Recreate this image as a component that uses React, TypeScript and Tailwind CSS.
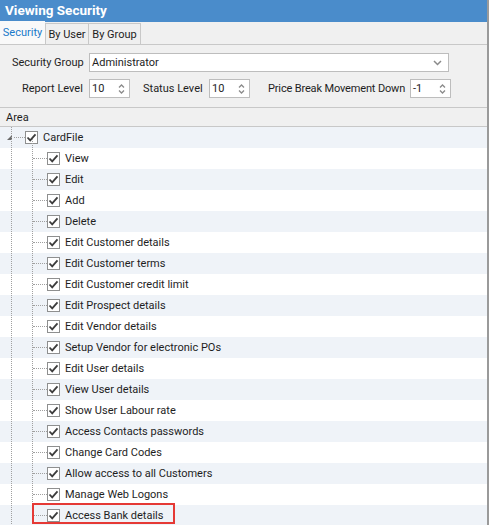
import React from 'react'

const items = [
  'View',
  'Edit',
  'Add',
  'Delete',
  'Edit Customer details',
  'Edit Customer terms',
  'Edit Customer credit limit',
  'Edit Prospect details',
  'Edit Vendor details',
  'Setup Vendor for electronic POs',
  'Edit User details',
  'View User details',
  'Show User Labour rate',
  'Access Contacts passwords',
  'Change Card Codes',
  'Allow access to all Customers',
  'Manage Web Logons',
  'Access Bank details',
]

function Check() {
  return (
    <span className="flex h-[13px] w-[13px] shrink-0 items-center justify-center border border-[#8e8f8f] bg-white">
      <svg width="11" height="11" viewBox="0 0 11 11">
        <path d="M1.5 5.5 L4.2 8.3 L9.5 2.3" fill="none" stroke="#3c3c3c" strokeWidth="1.8" />
      </svg>
    </span>
  )
}

function Spin({ value }: { value: string }) {
  return (
    <div className="flex h-[19px] w-[41px] shrink-0 items-center justify-between border border-[#bdbdbd] bg-white pl-[2px] pr-[4px]">
      <span>{value}</span>
      <svg width="7" height="12" viewBox="0 0 7 12">
        <path d="M1 4.5 L3.5 2 L6 4.5 M1 7.5 L3.5 10 L6 7.5" fill="none" stroke="#8a8a8a" strokeWidth="1.3" />
      </svg>
    </div>
  )
}

export default function App() {
  return (
    <div
      className="h-[525px] w-[489px] overflow-hidden whitespace-nowrap border-r-2 border-[#9a9a9a] bg-[#f0f0f0] text-[11px] leading-none text-[#1e1e1e]"
      style={{ fontFamily: 'Roboto, "Noto Sans", sans-serif' }}
    >
      <div className="flex h-[22px] items-center bg-[#4a8ccb] pl-[5px] text-[13.5px] font-bold text-white">
        Viewing Security
      </div>
      <div className="flex h-[23px] items-end border-b border-[#c8c8c8]">
        <div className="flex h-[23px] w-[45px] items-center justify-center bg-[#f9f9f9] text-[#1979ca]">Security</div>
        <div className="flex h-[21px] w-[44px] items-center justify-center border-x border-t border-[#c8c8c8] bg-[#efefef]">By User</div>
        <div className="flex h-[21px] w-[52px] items-center justify-center border-r border-t border-[#c8c8c8] bg-[#efefef]">By Group</div>
      </div>
      <div className="flex flex-col gap-[7px] border-b border-[#c8c8c8] pb-[9px] pt-[8px]">
        <div className="flex items-center">
          <span className="w-[89px] shrink-0 pl-[12px]">Security Group</span>
          <div className="flex h-[19px] w-[360px] items-center justify-between border border-[#bdbdbd] bg-white pl-[2px] pr-[6px]">
            <span>Administrator</span>
            <svg width="9" height="6" viewBox="0 0 9 6">
              <path d="M1 1 L4.5 4.5 L8 1" fill="none" stroke="#8a8a8a" strokeWidth="1.5" />
            </svg>
          </div>
        </div>
        <div className="flex items-center">
          <span className="w-[89px] shrink-0 pl-[22px]">Report Level</span>
          <Spin value="10" />
          <span className="ml-[13px] w-[66px] shrink-0">Status Level</span>
          <Spin value="10" />
          <span className="ml-[18px] w-[142px] shrink-0 tracking-[-0.15px]">Price Break Movement Down</span>
          <Spin value="-1" />
        </div>
      </div>
      <div className="flex h-[19px] items-center border-b border-[#c8c8c8] pl-[6px]">Area</div>
      <div className="relative bg-white">
        <div className="absolute left-[11px] top-0 h-full border-l border-dotted border-[#a0a0a0]" />
        <div className="absolute left-[32px] top-[12px] h-full border-l border-dotted border-[#a0a0a0]" />
        <div className="flex h-[21px] items-center bg-[#eff3f8]">
          <svg className="ml-[6px]" width="7" height="7" viewBox="0 0 7 7">
            <path d="M6 1 L6 6 L1 6 Z" fill="#6a6a6a" />
          </svg>
          <span className="ml-[1px] w-[11px] border-t border-dotted border-[#a0a0a0]" />
          <Check />
          <span className="ml-[5px]">CardFile</span>
        </div>
        {items.map((label, i) => (
          <div key={label} className={`flex h-[21px] items-center ${i % 2 === 1 ? 'bg-[#eff3f8]' : 'bg-white'}`}>
            <span className="ml-[33px] w-[14px] border-t border-dotted border-[#a0a0a0]" />
            <Check />
            <span className="ml-[5px]">{label}</span>
          </div>
        ))}
        <div className="absolute left-[32px] top-[376px] h-[21px] w-[143px] border-2 border-[#e53935]" />
      </div>
    </div>
  )
}
